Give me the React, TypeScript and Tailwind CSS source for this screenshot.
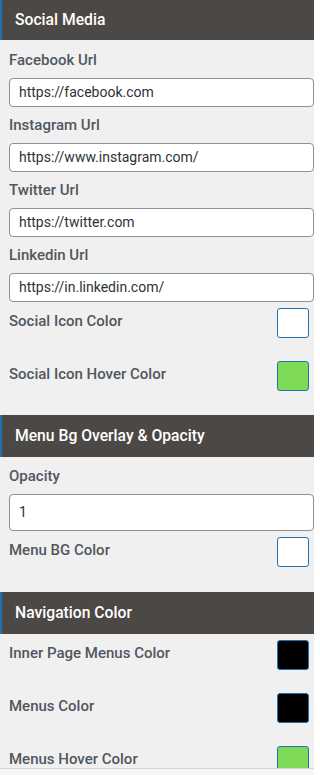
import React from "react"

const font = { fontFamily: "Roboto, 'Liberation Sans', sans-serif" }

function SectionHeader({ title, h }: { title: string; h: string }) {
  return (
    <div
      className={`flex items-center border-l-2 border-[#2271b1] bg-[#4c4845] pl-[13px] text-[15.7px] font-medium text-white ${h}`}
    >
      {title}
    </div>
  )
}

function TextField({ label, value, mt, tall }: { label: string; value: string; mt: string; tall?: boolean }) {
  return (
    <div className={mt}>
      <div className="h-[20px] pl-[9px] text-[15px] leading-[20px] font-medium text-[#50575e]">{label}</div>
      <div
        className={`mt-[8px] ml-[9px] flex w-[305px] items-center rounded-[4px] border border-[#8c8f94] bg-white pl-[9px] text-[14px] text-[#2c3338] ${
          tall ? "h-[37px]" : "h-[29px]"
        }`}
      >
        {value}
      </div>
    </div>
  )
}

function ColorRow({ label, color, mt }: { label: string; color: string; mt: string }) {
  return (
    <div className={`flex h-[30px] items-center justify-between pr-[5px] pl-[9px] ${mt}`}>
      <span className="-mt-[3px] text-[15px] font-medium text-[#50575e]">{label}</span>
      <span className={`h-[30px] w-[32px] rounded-[3px] border border-[#2271b1] ${color}`} />
    </div>
  )
}

export default function App() {
  return (
    <div className="h-[775px] w-[314px] overflow-hidden bg-[#f6f7f7]" style={font}>
      <div className="h-[769px] overflow-hidden border-b border-[#d6d6d6] bg-[#f0f0f1]">
        <SectionHeader title="Social Media" h="h-[40px]" />
        <TextField label="Facebook Url" value="https://facebook.com" mt="mt-[10px]" />
        <TextField label="Instagram Url" value="https://www.instagram.com/" mt="mt-[8px]" />
        <TextField label="Twitter Url" value="https://twitter.com" mt="mt-[8px]" />
        <TextField label="Linkedin Url" value="https://in.linkedin.com/" mt="mt-[8px]" />
        <ColorRow label="Social Icon Color" color="bg-white" mt="mt-[6px]" />
        <ColorRow label="Social Icon Hover Color" color="bg-[#7ed957]" mt="mt-[23px]" />

        <div className="mt-[24px]">
          <SectionHeader title="Menu Bg Overlay & Opacity" h="h-[42px]" />
        </div>
        <TextField label="Opacity" value="1" mt="mt-[9px]" tall />
        <ColorRow label="Menu BG Color" color="bg-white" mt="mt-[6px]" />

        <div className="mt-[25px]">
          <SectionHeader title="Navigation Color" h="h-[42px]" />
        </div>
        <ColorRow label="Inner Page Menus Color" color="bg-black" mt="mt-[6px]" />
        <ColorRow label="Menus Color" color="bg-black" mt="mt-[23px]" />
        <ColorRow label="Menus Hover Color" color="bg-[#7ed957]" mt="mt-[23px]" />
      </div>
    </div>
  )
}
